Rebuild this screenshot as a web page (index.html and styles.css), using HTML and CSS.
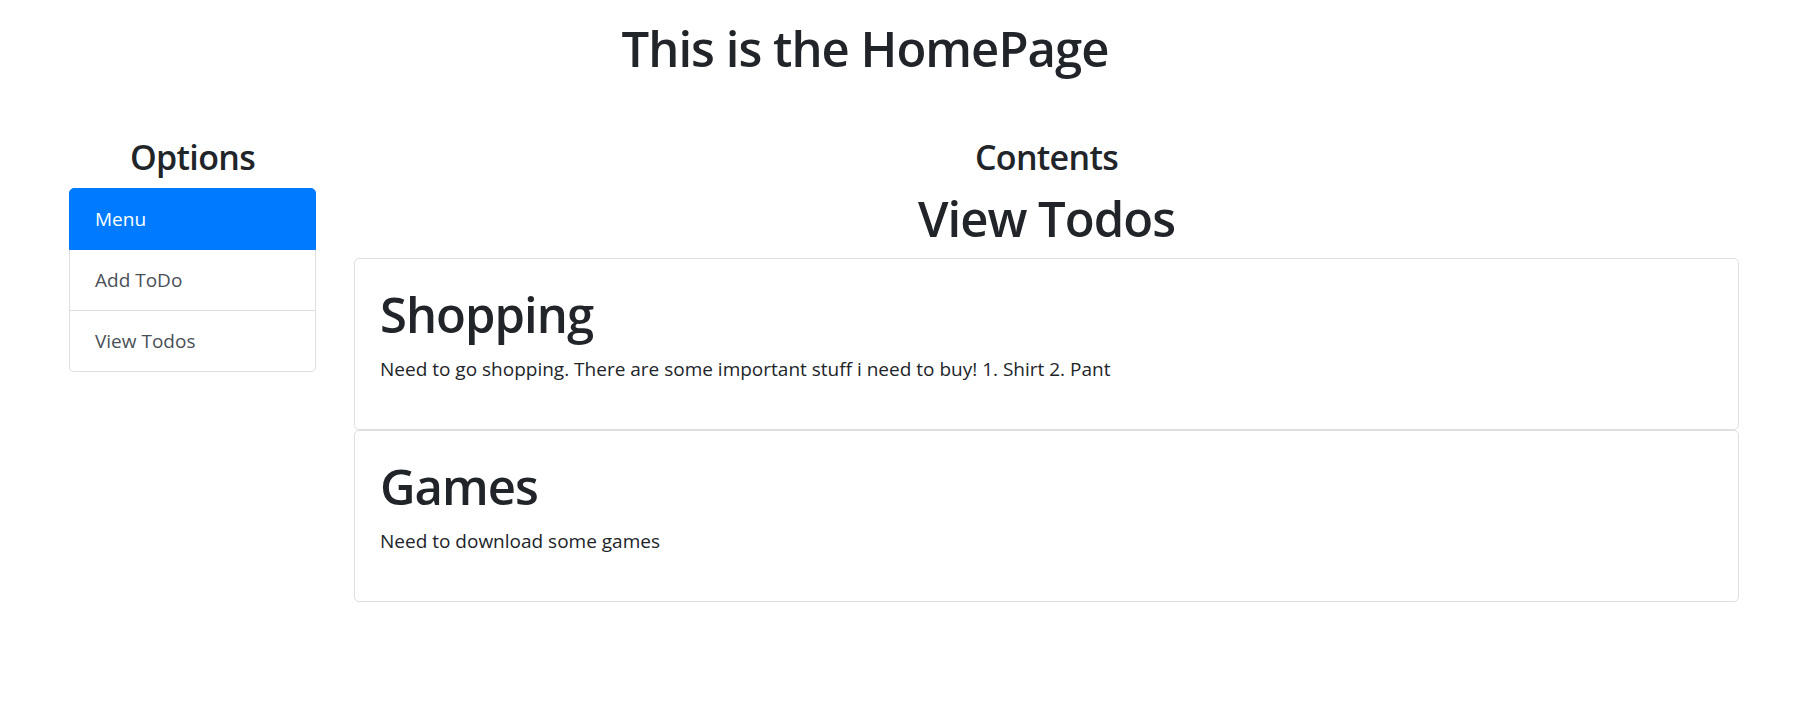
FILE: index.html
```html
<!DOCTYPE html>
<html lang="en">
<head>
<meta charset="utf-8">
<title>HomePage</title>
<link rel="stylesheet" href="styles.css">
</head>
<body>
  <header class="page-header">
    <h1 class="page-title">This is the HomePage</h1>
  </header>
  <div class="layout">
    <aside class="sidebar">
      <h3 class="section-title">Options</h3>
      <div class="list-group">
        <a class="list-item active" href="#">Menu</a>
        <a class="list-item" href="#">Add ToDo</a>
        <a class="list-item" href="#">View Todos</a>
      </div>
    </aside>
    <main class="content">
      <h3 class="section-title">Contents</h3>
      <h1 class="view-title">View Todos</h1>
      <div class="card">
        <h1 class="card-title">Shopping</h1>
        <p class="card-text">Need to go shopping. There are some important stuff i need to buy! 1. Shirt 2. Pant</p>
      </div>
      <div class="card">
        <h1 class="card-title">Games</h1>
        <p class="card-text">Need to download some games</p>
      </div>
    </main>
  </div>
</body>
</html>
```
FILE: styles.css
```css
* { box-sizing: border-box; }

body {
  margin: 0;
  font-family: "Open Sans", "Noto Sans", sans-serif;
  font-size: 19px;
  line-height: 30px;
  color: #212529;
  background: #fff;
}

h1, h3 {
  font-weight: 600;
  margin: 0 0 10px;
  letter-spacing: -0.02em;
}

.page-header {
  padding-right: 63px;
}

.page-title {
  text-align: center;
  font-size: 49px;
  line-height: 60px;
  margin: 18px 0 58px;
}

.layout {
  display: flex;
  align-items: flex-start;
  padding-left: 69px;
  gap: 38px;
}

.sidebar {
  width: 247px;
  flex: none;
}

.section-title {
  text-align: center;
  font-size: 34px;
  line-height: 42px;
}

.list-group {
  display: flex;
  flex-direction: column;
}

.list-item {
  display: block;
  position: relative;
  padding: 15px 25px;
  line-height: 30px;
  color: #495057;
  text-decoration: none;
  background: #fff;
  border: 1px solid rgba(0, 0, 0, 0.125);
  margin-bottom: -1px;
}

.list-item:first-child {
  border-top-left-radius: 5px;
  border-top-right-radius: 5px;
}

.list-item:last-child {
  margin-bottom: 0;
  border-bottom-left-radius: 5px;
  border-bottom-right-radius: 5px;
}

.list-item.active {
  z-index: 2;
  color: #fff;
  background: #007bff;
  border-color: #007bff;
}

.content {
  width: 1385px;
  flex: none;
}

.view-title {
  text-align: center;
  font-size: 49px;
  line-height: 60px;
}

.card {
  border: 1px solid rgba(0, 0, 0, 0.125);
  border-radius: 5px;
  padding: 25px;
}

.card-title {
  font-size: 49px;
  line-height: 60px;
}

.card-text {
  margin: 0 0 20px;
}
```
